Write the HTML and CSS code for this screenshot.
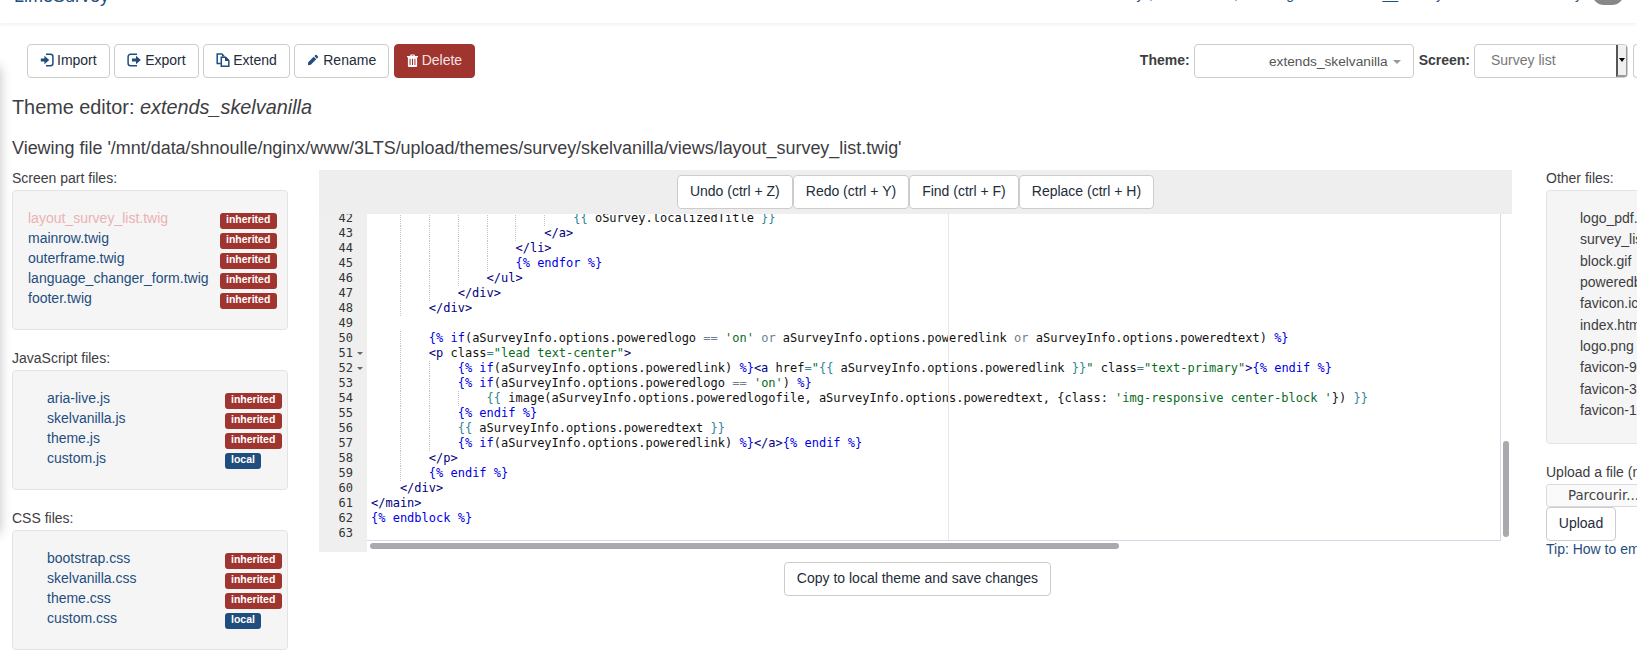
FILE: index.html
```html
<!DOCTYPE html>
<html lang="en">
<head>
<meta charset="utf-8">
<title>Theme editor</title>
<link rel="stylesheet" href="styles.css">
</head>
<body>
<header class="navbar">
  <div class="nav-row">
    <a class="brand">LimeSurvey</a>
    <div class="nav-links">
      <span class="n n1">Survey</span><span class="n n2">,</span><span class="n n3">,</span><span class="n n4">Setting</span><span class="n n5">__</span><span class="n n6">Survey</span><span class="n n7">Survey</span>
    </div>
    <span class="avatar"></span>
  </div>
</header>
<div class="edge-shadow"></div>

<section class="toolbar">
  <div class="btn-group">
    <a class="btn"><svg class="ico ico-im" viewBox="0 0 14 14"><path class="line" d="M6 1.300h4.400A2.500 2.500 0 0 1 12.900 3.800v6.400a2.500 2.500 0 0 1-2.500 2.500H6"/><path d="M.8 5.500h3.600V2.800L9.200 7l-4.800 4.200V8.500H.8z"/></svg>Import</a>
    <a class="btn"><svg class="ico" viewBox="0 0 14 14"><path class="line" d="M10 1.300H3.600A2.500 2.500 0 0 0 1.100 3.800v6.400a2.500 2.500 0 0 0 2.500 2.500H10"/><path d="M5 5.500h4V2.800L13.800 7 9 11.200V8.500H5z"/></svg>Export</a>
    <a class="btn"><svg class="ico ico-im" viewBox="0 0 14 14"><path class="line" d="M6.500 1H1.200v9.500h3.600"/><path class="line" d="M5.300 4.300h4.200l3.300 3.300v5.700H5.300z"/><path d="M9 4h1l3 3v1H9z"/><path d="M6 1h1l2 2.500H6z"/></svg>Extend</a>
    <a class="btn"><svg class="ico ico-n" viewBox="0 0 14 14"><path d="M9.800 1.200a1 1 0 0 1 1.400 0l1.600 1.600a1 1 0 0 1 0 1.400l-1.200 1.200-3-3zM7.800 3.200l3 3L4.400 12.600 1 13l.4-3.400z"/></svg>Rename</a>
    <a class="btn btn-danger"><svg class="ico ico-t" viewBox="0 0 12 14"><path fill-rule="evenodd" d="M4 .5h4l.8 1.700H12v1.300h-1V13a1 1 0 0 1-1 1H2a1 1 0 0 1-1-1V3.500H0V2.200h3.200zM4.700 2.200h2.600l-.3-.6H5zM2.800 5v7h1.100V5zM5.400 5v7h1.200V5zM8.100 5v7h1.100V5z"/></svg>Delete</a>
  </div>
  <div class="pickers">
    <label class="pick-label">Theme:</label>
    <div class="theme-select"><span>extends_skelvanilla</span><i class="caret"></i></div>
    <label class="pick-label">Screen:</label>
    <div class="screen-select"><span>Survey list</span><b class="spin"><i></i></b></div>
    <div class="stub"></div>
  </div>
</section>

<h1 class="title">Theme editor: <em>extends_skelvanilla</em></h1>
<p class="viewing">Viewing file '/mnt/data/shnoulle/nginx/www/3LTS/upload/themes/survey/skelvanilla/views/layout_survey_list.twig'</p>

<main class="columns">
  <aside class="left">
    <div class="group">
      <div class="cap">Screen part files:</div>
      <div class="well well-a">
        <div class="file"><a class="active">layout_survey_list.twig</a><span class="badge red">inherited</span></div>
        <div class="file"><a>mainrow.twig</a><span class="badge red">inherited</span></div>
        <div class="file"><a>outerframe.twig</a><span class="badge red">inherited</span></div>
        <div class="file"><a>language_changer_form.twig</a><span class="badge red">inherited</span></div>
        <div class="file"><a>footer.twig</a><span class="badge red">inherited</span></div>
      </div>
    </div>
    <div class="group">
      <div class="cap">JavaScript files:</div>
      <div class="well well-b">
        <div class="file"><a>aria-live.js</a><span class="badge red">inherited</span></div>
        <div class="file"><a>skelvanilla.js</a><span class="badge red">inherited</span></div>
        <div class="file"><a>theme.js</a><span class="badge red">inherited</span></div>
        <div class="file"><a>custom.js</a><span class="badge blue">local</span></div>
      </div>
    </div>
    <div class="group">
      <div class="cap">CSS files:</div>
      <div class="well well-b">
        <div class="file"><a>bootstrap.css</a><span class="badge red">inherited</span></div>
        <div class="file"><a>skelvanilla.css</a><span class="badge red">inherited</span></div>
        <div class="file"><a>theme.css</a><span class="badge red">inherited</span></div>
        <div class="file"><a>custom.css</a><span class="badge blue">local</span></div>
      </div>
    </div>
  </aside>

  <section class="center">
    <div class="ed-tools">
      <a class="btn">Undo (ctrl + Z)</a><a class="btn">Redo (ctrl + Y)</a><a class="btn">Find (ctrl + F)</a><a class="btn">Replace (ctrl + H)</a>
    </div>
    <div class="ace">
      <div class="gutter"><div class="roll">
        <div>42</div><div>43</div><div>44</div><div>45</div><div>46</div><div>47</div><div>48</div><div>49</div><div>50</div><div class="fold">51</div><div class="fold">52</div><div>53</div><div>54</div><div>55</div><div>56</div><div>57</div><div>58</div><div>59</div><div>60</div><div>61</div><div>62</div><div>63</div>
      </div></div>
      <div class="scroller"><div class="roll code">
<div class="l"><i class="in0"></i><i class="in"></i><i class="in"></i><i class="in"></i><i class="in"></i><i class="in"></i><i class="in"></i><span class="b">{{</span> oSurvey.localizedTitle <span class="b">}}</span></div>
<div class="l"><i class="in0"></i><i class="in"></i><i class="in"></i><i class="in"></i><i class="in"></i><i class="in"></i><span class="t">&lt;/a&gt;</span></div>
<div class="l"><i class="in0"></i><i class="in"></i><i class="in"></i><i class="in"></i><i class="in"></i><span class="t">&lt;/li&gt;</span></div>
<div class="l"><i class="in0"></i><i class="in"></i><i class="in"></i><i class="in"></i><i class="in"></i><span class="k">{% endfor %}</span></div>
<div class="l"><i class="in0"></i><i class="in"></i><i class="in"></i><i class="in"></i><span class="t">&lt;/ul&gt;</span></div>
<div class="l"><i class="in0"></i><i class="in"></i><i class="in"></i><span class="t">&lt;/div&gt;</span></div>
<div class="l"><i class="in0"></i><i class="in"></i><span class="t">&lt;/div&gt;</span></div>
<div class="l"></div>
<div class="l"><i class="in0"></i><i class="in"></i><span class="k">{% if</span>(aSurveyInfo.options.poweredlogo <span class="o">==</span> <span class="s">'on'</span> <span class="o">or</span> aSurveyInfo.options.poweredlink <span class="o">or</span> aSurveyInfo.options.poweredtext) <span class="k">%}</span></div>
<div class="l"><i class="in0"></i><i class="in"></i><span class="t">&lt;p</span> class<span class="b">=</span><span class="s">"lead text-center"</span><span class="t">&gt;</span></div>
<div class="l"><i class="in0"></i><i class="in"></i><i class="in"></i><span class="k">{% if</span>(aSurveyInfo.options.poweredlink) <span class="k">%}</span><span class="t">&lt;a</span> href<span class="b">=</span><span class="s">"</span><span class="b">{{</span> aSurveyInfo.options.poweredlink <span class="b">}}</span><span class="s">"</span> class<span class="b">=</span><span class="s">"text-primary"</span><span class="t">&gt;</span><span class="k">{% endif %}</span></div>
<div class="l"><i class="in0"></i><i class="in"></i><i class="in"></i><span class="k">{% if</span>(aSurveyInfo.options.poweredlogo <span class="o">==</span> <span class="s">'on'</span>) <span class="k">%}</span></div>
<div class="l"><i class="in0"></i><i class="in"></i><i class="in"></i><i class="in"></i><span class="b">{{</span> image(aSurveyInfo.options.poweredlogofile, aSurveyInfo.options.poweredtext, {class: <span class="s">'img-responsive center-block '</span>}) <span class="b">}}</span></div>
<div class="l"><i class="in0"></i><i class="in"></i><i class="in"></i><span class="k">{% endif %}</span></div>
<div class="l"><i class="in0"></i><i class="in"></i><i class="in"></i><span class="b">{{</span> aSurveyInfo.options.poweredtext <span class="b">}}</span></div>
<div class="l"><i class="in0"></i><i class="in"></i><i class="in"></i><span class="k">{% if</span>(aSurveyInfo.options.poweredlink) <span class="k">%}</span><span class="t">&lt;/a&gt;</span><span class="k">{% endif %}</span></div>
<div class="l"><i class="in0"></i><i class="in"></i><span class="t">&lt;/p&gt;</span></div>
<div class="l"><i class="in0"></i><i class="in"></i><span class="k">{% endif %}</span></div>
<div class="l"><i class="in0"></i><span class="t">&lt;/div&gt;</span></div>
<div class="l"><span class="t">&lt;/main&gt;</span></div>
<div class="l"><span class="k">{% endblock %}</span></div>
<div class="l"></div>
      </div></div>
      <div class="margin-line"></div>
      <div class="hbar"></div>
      <div class="vbar"></div>
    </div>
    <div class="save-row"><a class="btn">Copy to local theme and save changes</a></div>
  </section>

  <aside class="right">
    <div class="group">
      <div class="cap">Other files:</div>
      <div class="well well-c">
        <div class="other">logo_pdf.png</div>
        <div class="other">survey_list.png</div>
        <div class="other">block.gif</div>
        <div class="other">poweredby.png</div>
        <div class="other">favicon.ico</div>
        <div class="other">index.html</div>
        <div class="other">logo.png</div>
        <div class="other">favicon-96x96.png</div>
        <div class="other">favicon-32x32.png</div>
        <div class="other">favicon-16x16.png</div>
      </div>
    </div>
    <div class="cap">Upload a file (max. 2 MB):</div>
    <div class="file-input">Parcourir...</div>
    <a class="btn">Upload</a>
    <a class="tip">Tip: How to embed a picture in your theme?</a>
  </aside>
</main>
</body>
</html>
```
FILE: styles.css
```css
* { box-sizing: border-box; }
html, body { margin: 0; height: 655px; overflow: hidden; }
body {
  position: relative;
  width: 1637px;
  background: #fff;
  color: #3d3d42;
  font: 14px/20px "Liberation Sans", Arial, sans-serif;
}
a { color: #1f4e7e; text-decoration: none; }

.navbar {
  height: 23px;
  overflow: hidden;
  background: #fff;
  box-shadow: 0 1px 4px rgba(0, 0, 0, .08);
  position: relative;
}
.nav-row {
  display: flex;
  align-items: baseline;
  height: 24px;
  margin-top: -14px;
  padding: 0 13px 0 14px;
}
.brand { font-size: 18px; }
.nav-links { display: flex; align-self: flex-start; margin: -2px 0 0 auto; color: #1f4e7e; }
.n { display: block; text-align: right; white-space: nowrap; }
.n1 { width: 31px; }
.n2 { width: 22px; }
.n3 { width: 85px; }
.n4 { width: 56px; }
.n5 { width: 104px; }
.n6 { width: 45px; }
.n7 { width: 139px; }
.avatar {
  align-self: flex-start;
  width: 32px;
  height: 19px;
  margin-left: 10px;
  background: #888;
  border-radius: 0 0 12px 12px;
}
.edge-shadow {
  position: absolute;
  left: -12px;
  top: 66px;
  width: 12px;
  height: 468px;
  box-shadow: 0 0 12px rgba(0, 0, 0, .25);
  border-radius: 6px;
}

.toolbar {
  display: flex;
  justify-content: space-between;
  height: 34px;
  margin-top: 21px;
  padding-left: 27px;
}
.btn-group { display: flex; gap: 4.500px; }
.btn {
  display: inline-flex;
  align-items: center;
  justify-content: center;
  height: 34px;
  padding: 0 12px 2px;
  color: #222c3a;
  background: #fff;
  border: 1px solid #ccc;
  border-radius: 4px;
  white-space: nowrap;
}
.ico { width: 14px; height: 14px; margin-right: 4px; fill: #1f4e7e; flex: none; }
.ico-im { margin-right: 3px; }
.ico-n { width: 12px; height: 12px; }
.ico-t { width: 11px; height: 13px; }
.ico .line { fill: none; stroke: #1f4e7e; stroke-width: 1.500; }
.btn-danger { color: #f3e3e3; background: #a0352f; border-color: #a0352f; }
.btn-danger .ico { fill: #fff; }

.pickers { display: flex; align-items: center; padding-bottom: 2px; }
.pick-label { font-weight: 700; margin-right: 4px; }
.theme-select {
  display: flex;
  align-items: center;
  justify-content: flex-end;
  width: 220px;
  height: 34px;
  margin-bottom: -2px;
  margin-right: 5px;
  padding: 2px 12px 0 0;
  color: #555;
  font-size: 13.700px;
  border: 1px solid #ccc;
  border-radius: 4px;
}
.caret {
  width: 0;
  height: 0;
  margin-left: 5px;
  border-top: 4px solid #999;
  border-left: 4px solid transparent;
  border-right: 4px solid transparent;
}
.screen-select {
  display: flex;
  align-items: center;
  justify-content: space-between;
  width: 154px;
  height: 34px;
  margin-bottom: -2px;
  padding-left: 16px;
  color: #777;
  border: 1px solid #ccc;
  border-radius: 4px;
  overflow: hidden;
}
.screen-select span { margin-top: -2px; }
.spin {
  display: flex;
  align-items: center;
  justify-content: center;
  width: 11px;
  height: 100%;
  background: #f0f0f0;
  border-left: 2px solid #555;
  border-bottom: 2px solid #999;
  border-right: 1px solid #999;
}
.spin i {
  width: 0;
  height: 0;
  border-top: 4px solid #000;
  border-left: 3px solid transparent;
  border-right: 3px solid transparent;
}
.stub {
  width: 4px;
  height: 34px;
  margin: 0 0 -2px 5px;
  border: 1px solid #ccc;
  border-right: 0;
  border-radius: 4px 0 0 4px;
}

.title {
  margin: 17px 0 0 12px;
  font-size: 19.850px;
  line-height: 24px;
  font-weight: 400;
}
.viewing {
  margin: 17px 0 0 12px;
  font-size: 17.950px;
  line-height: 24px;
}

.columns { display: flex; align-items: flex-start; margin-top: 8px; }
.left { flex: none; width: 276px; margin-left: 12px; }
.right { flex: none; width: 276px; margin-left: 34px; }
.group { margin-bottom: 18px; }
.cap { margin-bottom: 2px; white-space: nowrap; }
.well {
  background: #f5f5f5;
  border: 1px solid #e3e3e3;
  border-radius: 4px;
}
.well-a { height: 140px; padding: 17px 0 0 15px; }
.well-b { height: 120px; padding: 17px 0 0 34px; }
.well-c { height: 254px; width: 276px; padding: 17px 0 0 33px; }
.file { display: flex; height: 20px; white-space: nowrap; }
.file a { flex: none; }
.well-a .file a { width: 192px; }
.well-b .file a { width: 178px; }
.active { color: #eab2b2; }
.badge {
  flex: none;
  height: 16px;
  margin-top: 5px;
  padding: 0 6px;
  color: #fff;
  font-size: 10.500px;
  font-weight: 700;
  line-height: 13px;
  border-radius: 3px;
}
.red { width: 57px; background: #a0352f; }
.blue { width: 36px; background: #1f4e7e; }
.other { height: 21.330px; white-space: nowrap; color: #3d3d42; }

.center { flex: none; width: 1193px; margin: 2px 0 0 31px; }
.ed-tools {
  display: flex;
  justify-content: center;
  height: 44px;
  padding-top: 5px;
  background: #eee;
}
.ace {
  position: relative;
  display: flex;
  height: 338px;
  overflow: hidden;
}
.gutter {
  flex: none;
  width: 48px;
  height: 338px;
  overflow: hidden;
  background: #efefef;
  color: #333;
  text-align: right;
  font: 12px/15px "DejaVu Sans Mono", monospace;
}
.gutter .roll > div { position: relative; height: 15px; padding-right: 14px; }
.fold::after {
  content: "";
  position: absolute;
  right: 4px;
  top: 6px;
  border-top: 3.500px solid #666;
  border-left: 3px solid transparent;
  border-right: 3px solid transparent;
}
.roll { margin-top: -3px; }
.scroller {
  flex: none;
  width: 1134px;
  height: 327px;
  overflow: hidden;
  background: #fff;
  border-right: 1px solid #d5dbe6;
  border-bottom: 1px solid #d5dbe6;
  color: #111;
}
.code { padding-left: 4px; font: 12px/15px "DejaVu Sans Mono", monospace; }
.l { height: 15px; white-space: pre; }
.l i { display: inline-block; width: 4ch; height: 15px; vertical-align: top; }
.l .in {
  background: repeating-linear-gradient(#c4c4c4 0 1px, transparent 1px 2px) 0 0 / 1px 100% no-repeat;
}
.t { color: #000080; }
.k { color: #0000e6; }
.s { color: #0b6b1e; }
.b { color: #318495; }
.o { color: #708090; }
.margin-line {
  position: absolute;
  left: 629px;
  top: 0;
  width: 1px;
  height: 326px;
  background: #e8e8e8;
}
.hbar {
  position: absolute;
  left: 51px;
  top: 329px;
  width: 749px;
  height: 6px;
  background: #a9a9ae;
  border-radius: 3px;
}
.vbar {
  position: absolute;
  left: 1184px;
  top: 227px;
  width: 6px;
  height: 96px;
  background: #a9a9ae;
  border-radius: 3px;
}
.save-row { display: flex; justify-content: center; margin-top: 10px; padding-left: 4px; }

.file-input {
  width: 240px;
  height: 23px;
  padding-left: 21px;
  color: #444;
  background: #fafafa;
  border: 1px solid #d5dbe6;
  border-radius: 3px;
  font: 13.330px/21px "DejaVu Sans", sans-serif;
  white-space: nowrap;
}
.right > .btn { width: 70px; padding: 0 0 2px; display: flex; }
.tip { display: block; line-height: 16px; white-space: nowrap; }
```
